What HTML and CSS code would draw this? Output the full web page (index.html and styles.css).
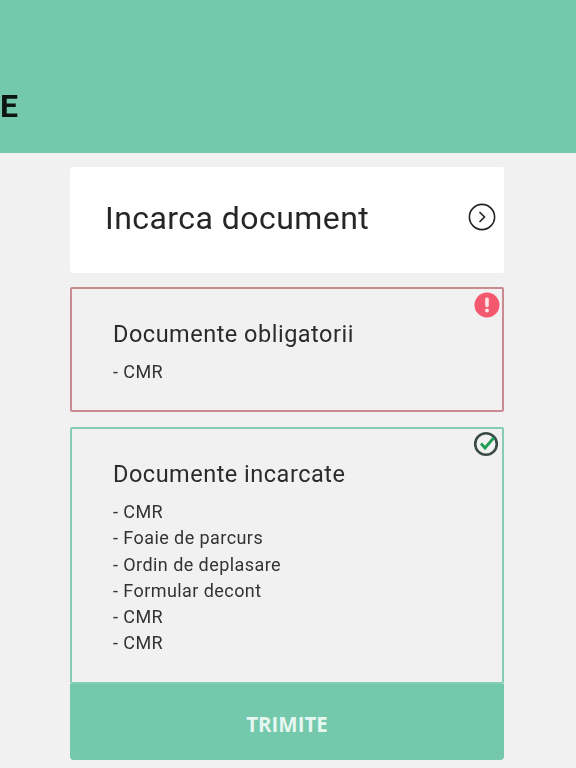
FILE: index.html
```html
<!DOCTYPE html>
<html lang="ro">
<head>
  <meta charset="UTF-8" />
  <title>Documente</title>
  <link rel="stylesheet" href="styles.css">
</head>
<body>
  <div class="header">
    <h1 class="title">E</h1>
  </div>

  <div class="content">
    <div class="upload">
      <span class="upload-label">Incarca document</span>
      <svg class="upload-icon" width="28" height="28" viewBox="0 0 28 28" fill="none" stroke="#222" stroke-width="1.6">
        <circle cx="14" cy="14" r="12.6" />
        <path d="M11.5 9L16.5 14l-5 5" />
      </svg>
    </div>

    <div class="doc-box doc-box-required">
      <svg class="badge" width="26" height="26" viewBox="0 0 26 26">
        <circle cx="13" cy="13" r="12.5" fill="#f4586f" />
        <rect x="11.2" y="5.5" width="3.6" height="9.5" rx="1.6" fill="#fbe4e6" />
        <circle cx="13" cy="18.6" r="2" fill="#fbe4e6" />
      </svg>
      <h2 class="doc-title">Documente obligatorii</h2>
      <ul class="doc-list">
        <li>- CMR</li>
      </ul>
    </div>

    <div class="doc-box doc-box-uploaded">
      <svg class="badge badge-ok" width="26" height="26" viewBox="0 0 26 26" fill="none">
        <circle cx="13" cy="13" r="10.8" stroke="#3a4a44" stroke-width="2.6" />
        <path d="M8 12.5l4 4.5 9-10.5" stroke="#1f9d57" stroke-width="2.8" />
      </svg>
      <h2 class="doc-title">Documente incarcate</h2>
      <ul class="doc-list">
        <li>- CMR</li>
        <li>- Foaie de parcurs</li>
        <li>- Ordin de deplasare</li>
        <li>- Formular decont</li>
        <li>- CMR</li>
        <li>- CMR</li>
      </ul>
    </div>

    <button class="send-button">TRIMITE</button>
  </div>
</body>
</html>
```

FILE: styles.css
```css
* {
  margin: 0;
  padding: 0;
  box-sizing: border-box;
}

body {
  font-family: Roboto, sans-serif;
  background-color: #f1f1f1;
  color: #2b2b2b;
  height: 768px;
  overflow: hidden;
}

.header {
  height: 153px;
  background-color: #74c8ac;
  padding-top: 87px;
}

.title {
  font-size: 32px;
  line-height: 38px;
  font-weight: 700;
  color: #0c1512;
  filter: blur(0.4px);
}

.content {
  width: 434px;
  margin-left: 70px;
  padding-top: 14px;
  display: flex;
  flex-direction: column;
}

.upload {
  height: 106px;
  background: #fff;
  border-radius: 2px;
  display: flex;
  align-items: center;
  justify-content: space-between;
  padding: 0 8px 5px 35px;
  margin-bottom: 14px;
}

.upload-label {
  font-size: 32px;
  letter-spacing: 0.45px;
  color: #262626;
  filter: blur(0.4px);
}

.upload-icon {
  margin-bottom: 1px;
  filter: blur(0.4px);
}

.doc-box {
  position: relative;
  border: 2px solid;
  border-radius: 2px;
  padding-left: 41px;
}

.doc-box-required {
  height: 125px;
  padding-top: 32px;
  border-color: #c98a92;
  margin-bottom: 15px;
}

.doc-box-uploaded {
  height: 257px;
  padding-top: 32px;
  border-color: #86cdb5;
}

.badge {
  position: absolute;
  top: 3px;
  right: 2px;
  filter: blur(0.4px);
}

.badge-ok {
  top: 2px;
  right: 3px;
}

.doc-title {
  font-size: 23.5px;
  line-height: 27px;
  font-weight: 400;
  letter-spacing: 0.5px;
  color: #2b2b2b;
  filter: blur(0.4px);
}

.doc-list {
  list-style: none;
  margin-top: 11px;
  font-size: 18px;
  line-height: 26.3px;
  letter-spacing: 0.43px;
  color: #333;
  filter: blur(0.4px);
}

.send-button {
  height: 76px;
  padding-top: 3px;
  background: #74c8ac;
  border: none;
  border-radius: 0 0 4px 4px;
  color: #e6f7f1;
  font-family: "Open Sans", sans-serif;
  font-size: 20.5px;
  font-weight: 700;
}
```
